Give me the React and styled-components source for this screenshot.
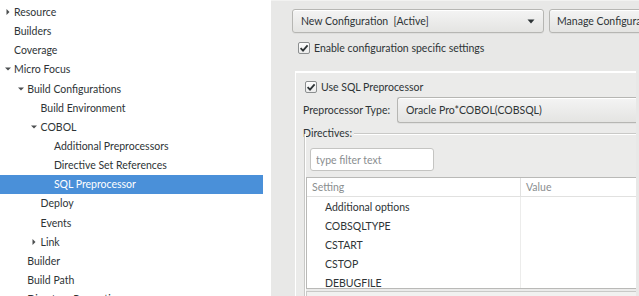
import React from "react";
import styled, { createGlobalStyle } from "styled-components";

const GlobalStyle = createGlobalStyle`
  html, body {
    margin: 0;
    padding: 0;
    width: 639px;
    height: 296px;
    overflow: hidden;
    background: #e8e8e7;
  }
  body {
    font-family: Lato, "Liberation Sans", sans-serif;
    font-size: 10.5px;
    color: #2e3436;
  }
`;

const treeItems = [
  { label: "Resource", level: 0, toggle: "closed" },
  { label: "Builders", level: 0 },
  { label: "Coverage", level: 0 },
  { label: "Micro Focus", level: 0, toggle: "open" },
  { label: "Build Configurations", level: 1, toggle: "open" },
  { label: "Build Environment", level: 2 },
  { label: "COBOL", level: 2, toggle: "open" },
  { label: "Additional Preprocessors", level: 3 },
  { label: "Directive Set References", level: 3 },
  { label: "SQL Preprocessor", level: 3, selected: true },
  { label: "Deploy", level: 2 },
  { label: "Events", level: 2 },
  { label: "Link", level: 2, toggle: "closed" },
  { label: "Builder", level: 1 },
  { label: "Build Path", level: 1 },
  { label: "Directory Properties", level: 1 },
];

const directives = [
  "Additional options",
  "COBSQLTYPE",
  "CSTART",
  "CSTOP",
  "DEBUGFILE",
];

function Expander({ state }) {
  if (!state) return <ExpanderBox />;
  return (
    <ExpanderBox>
      <svg width="8" height="8" viewBox="0 0 8 8">
        {state === "open" ? (
          <path d="M1 2.5 L7 2.5 L4 5.5 Z" fill="#4c4f50" />
        ) : (
          <path d="M2.5 1 L5.5 4 L2.5 7 Z" fill="#4c4f50" />
        )}
      </svg>
    </ExpanderBox>
  );
}

function Check({ label }) {
  return (
    <CheckRow>
      <CheckBox>
        <svg width="10" height="10" viewBox="0 0 10 10">
          <path
            d="M1.6 5.2 L4 7.6 L8.6 2.4"
            fill="none"
            stroke="#2e3436"
            strokeWidth="1.8"
          />
        </svg>
      </CheckBox>
      <span>{label}</span>
    </CheckRow>
  );
}

function DownArrow() {
  return (
    <svg width="8" height="5" viewBox="0 0 8 5">
      <path d="M0.5 0.5 L7.5 0.5 L4 4.5 Z" fill="#2e3436" />
    </svg>
  );
}

function App() {
  return (
    <>
      <GlobalStyle />
      <Window>
        <TreePane>
          <Tree>
            {treeItems.map((item) => (
              <TreeRow
                key={item.label}
                $level={item.level}
                $selected={item.selected}
              >
                <Expander state={item.toggle} />
                <span>{item.label}</span>
              </TreeRow>
            ))}
          </Tree>
        </TreePane>

        <PagePane>
          <ConfigBar>
            <ConfigCombo>
              <span>New Configuration&nbsp;&nbsp;[Active]</span>
              <DownArrow />
            </ConfigCombo>
            <PushButton>Manage Configurations...</PushButton>
          </ConfigBar>

          <EnableRow>
            <Check label="Enable configuration specific settings" />
          </EnableRow>

          <Panel>
            <UseRow>
              <Check label="Use SQL Preprocessor" />
            </UseRow>

            <TypeRow>
              <FieldLabel>Preprocessor Type:</FieldLabel>
              <TypeCombo>Oracle Pro*COBOL(COBSQL)</TypeCombo>
            </TypeRow>

            <Group>
              <GroupTitle>Directives:</GroupTitle>
              <GroupBody>
                <FilterInput placeholder="type filter text" readOnly />
                <Table>
                  <HeaderRow>
                    <HeaderCell $width="214px">Setting</HeaderCell>
                    <HeaderCell>Value</HeaderCell>
                  </HeaderRow>
                  <Rows>
                    {directives.map((name) => (
                      <DataRow key={name}>
                        <DataCell $width="214px">{name}</DataCell>
                        <DataCell />
                      </DataRow>
                    ))}
                  </Rows>
                </Table>
                <BelowBox />
              </GroupBody>
            </Group>
          </Panel>
        </PagePane>
      </Window>
    </>
  );
}

const Window = styled.div`
  display: flex;
  width: 639px;
  height: 296px;
  overflow: hidden;
`;

const TreePane = styled.div`
  width: 271px;
  flex-shrink: 0;
  background: #ffffff;
  padding-top: 2.5px;
  box-sizing: border-box;
  overflow: hidden;
`;

const Tree = styled.div`
  width: 263px;
  display: flex;
  flex-direction: column;
`;

const TreeRow = styled.div`
  display: flex;
  align-items: center;
  height: 19.15px;
  flex-shrink: 0;
  padding-left: ${(p) => p.$level * 13.3}px;
  white-space: nowrap;
  background: ${(p) => (p.$selected ? "#4a90d9" : "transparent")};
  color: ${(p) => (p.$selected ? "#ffffff" : "#2e3436")};
`;

const ExpanderBox = styled.span`
  display: inline-flex;
  align-items: center;
  justify-content: center;
  width: 13px;
  height: 13px;
  margin-left: 1px;
  flex-shrink: 0;
`;

const PagePane = styled.div`
  flex: 1;
  min-width: 0;
  display: flex;
  flex-direction: column;
  padding: 9px 0 0 21px;
  border-top: 1px solid #f2f2f1;
  box-sizing: border-box;
  background: #e8e8e7;
  overflow: hidden;
`;

const ConfigBar = styled.div`
  display: flex;
  gap: 5px;
  margin-top: -1px;
`;

const buttonLook = `
  height: 24px;
  box-sizing: border-box;
  border: 1px solid #b6b6b3;
  border-radius: 3px;
  background: linear-gradient(#f4f4f4, #e4e4e2);
  box-shadow: inset 0 1px #ffffff, 0 1px rgba(0, 0, 0, 0.04);
  display: flex;
  align-items: center;
  white-space: nowrap;
  color: #2e3436;
`;

const ConfigCombo = styled.div`
  ${buttonLook}
  width: 252px;
  flex-shrink: 0;
  justify-content: space-between;
  padding: 0 8px 0 8px;
`;

const PushButton = styled.div`
  ${buttonLook}
  flex-shrink: 0;
  padding: 0 7px;
`;

const EnableRow = styled.div`
  margin-top: 8px;
  padding-left: 6px;
`;

const CheckRow = styled.div`
  display: flex;
  align-items: center;
  gap: 4px;
  height: 14px;
  white-space: nowrap;
`;

const CheckBox = styled.span`
  width: 12px;
  height: 12px;
  box-sizing: border-box;
  border: 1px solid #8b8e8f;
  border-radius: 2px;
  background: linear-gradient(#fdfdfd, #ececec);
  display: inline-flex;
  align-items: center;
  justify-content: center;
  flex-shrink: 0;
`;

const Panel = styled.div`
  margin: 16px 3px 0 3px;
  flex: 1;
  border-top: 2px solid #ffffff;
  border-left: 1px solid #ffffff;
  background: #ebebea;
  display: flex;
  flex-direction: column;
  padding: 7px 0 0 7px;
  min-height: 0;
`;

const UseRow = styled.div`
  padding-left: 2px;
`;

const TypeRow = styled.div`
  display: flex;
  align-items: center;
  gap: 7px;
  margin-top: 3px;
`;

const FieldLabel = styled.span`
  white-space: nowrap;
`;

const TypeCombo = styled.div`
  ${buttonLook}
  height: 26px;
  flex: 1;
  padding: 0 8px;
  border-right: none;
  border-radius: 3px 0 0 3px;
`;

const Group = styled.div`
  margin-top: 3px;
  flex: 1;
  display: flex;
  flex-direction: column;
`;

const GroupTitle = styled.div`
  height: 14px;
  line-height: 14px;
  display: flex;
  align-items: center;
  gap: 2px;
  white-space: nowrap;

  &::after {
    content: "";
    flex: 1;
    height: 0;
    border-top: 1px solid #c9c9c7;
    border-bottom: 1px solid #ffffff;
    margin-top: 1px;
  }
`;

const GroupBody = styled.div`
  flex: 1;
  margin-left: 1px;
  margin-top: -6px;
  border-left: 1px solid #c9c9c7;
  box-shadow: inset 1px 0 #ffffff;
  padding: 14px 0 0 1px;
  display: flex;
  flex-direction: column;
`;

const FilterInput = styled.input`
  width: 124px;
  height: 23px;
  box-sizing: border-box;
  margin-left: 4px;
  border: 1px solid #c4c4c2;
  border-radius: 3px;
  background: #ffffff;
  padding: 0 5px;
  font: inherit;
  color: #2e3436;
  outline: none;

  &::placeholder {
    color: #8a8e8f;
  }
`;

const Table = styled.div`
  margin-top: 6px;
  height: 112px;
  box-sizing: border-box;
  border: 1px solid #b9b9b7;
  border-right: none;
  background: #ffffff;
  display: flex;
  flex-direction: column;
  overflow: hidden;
`;

const HeaderRow = styled.div`
  display: flex;
  height: 18px;
  flex-shrink: 0;
  border-bottom: 1px solid #e1e1e0;
`;

const HeaderCell = styled.div`
  width: ${(p) => p.$width || "auto"};
  flex: ${(p) => (p.$width ? "none" : "1")};
  display: flex;
  align-items: center;
  padding-left: 5px;
  box-sizing: border-box;
  color: #8a8e8f;
  border-right: ${(p) => (p.$width ? "1px solid #e1e1e0" : "none")};
`;

const Rows = styled.div`
  display: flex;
  flex-direction: column;
`;

const DataRow = styled.div`
  display: flex;
  height: 19px;
  flex-shrink: 0;
`;

const DataCell = styled.div`
  width: ${(p) => p.$width || "auto"};
  flex: ${(p) => (p.$width ? "none" : "1")};
  display: flex;
  align-items: center;
  padding-left: 18px;
  box-sizing: border-box;
  white-space: nowrap;
  border-right: ${(p) => (p.$width ? "1px solid #ececeb" : "none")};
`;

const BelowBox = styled.div`
  margin-top: 2px;
  height: 12px;
  border: 1px solid #c9c9c7;
  border-right: none;
  background: #f1f1f0;
`;

export default App;
